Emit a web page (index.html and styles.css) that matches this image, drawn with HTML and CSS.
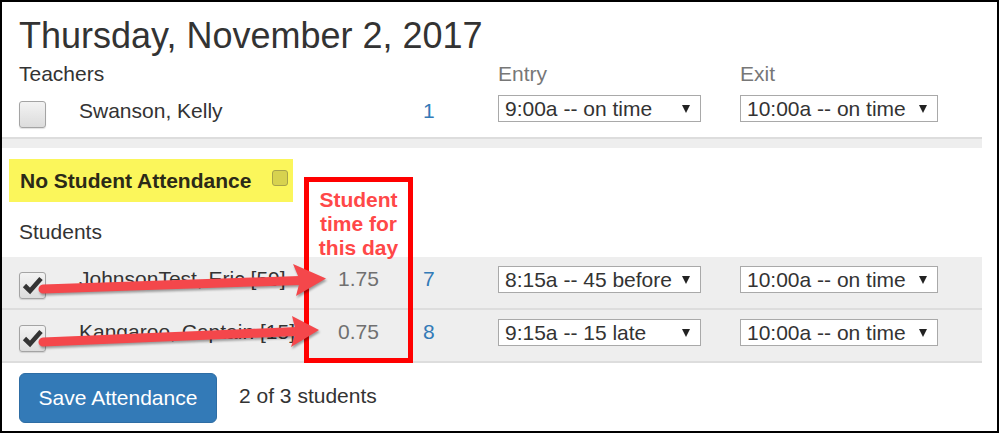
FILE: index.html
```html
<!DOCTYPE html>
<html>
<head>
<meta charset="utf-8">
<link rel="stylesheet" href="styles.css">
</head>
<body>
<div class="frame">
  <div class="panel">
    <h1 class="title">Thursday, November 2, 2017</h1>
    <div class="grid head-row">
      <div class="span2">Teachers</div>
      <div class="muted entry-col">Entry</div>
      <div class="muted exit-col">Exit</div>
    </div>
    <div class="grid row teacher">
      <div class="cb"><span class="box"></span></div>
      <div class="cell">Swanson, Kelly</div>
      <div class="cell hours"></div>
      <div class="cell num">1</div>
      <div class="sel w-entry"><span>9:00a -- on time</span><i></i></div>
      <div class="sel w-exit"><span>10:00a -- on time</span><i></i></div>
    </div>
    <div class="spacer"></div>
    <div class="noatt"><span>No Student Attendance</span><span class="mini"></span></div>
    <div class="students-label">Students</div>
    <div class="grid row striped">
      <div class="cb"><span class="box checked"><svg viewBox="0 0 25 25" width="25" height="25"><polyline points="4.5,12.5 10,18 21,5.5" fill="none" stroke="#333" stroke-width="4.6"/></svg></span></div>
      <div class="cell name">JohnsonTest, Eric [59]</div>
      <div class="cell hours">1.75</div>
      <div class="cell num">7</div>
      <div class="sel w-entry"><span>8:15a -- 45 before</span><i></i></div>
      <div class="sel w-exit"><span>10:00a -- on time</span><i></i></div>
    </div>
    <div class="grid row striped">
      <div class="cb"><span class="box checked"><svg viewBox="0 0 25 25" width="25" height="25"><polyline points="4.5,12.5 10,18 21,5.5" fill="none" stroke="#333" stroke-width="4.6"/></svg></span></div>
      <div class="cell name">Kangaroo, Captain [15]</div>
      <div class="cell hours">0.75</div>
      <div class="cell num">8</div>
      <div class="sel w-entry"><span>9:15a -- 15 late</span><i></i></div>
      <div class="sel w-exit"><span>10:00a -- on time</span><i></i></div>
    </div>
    <div class="actions">
      <button class="btn">Save Attendance</button>
      <span class="count">2 of 3 students</span>
    </div>
  </div>

  <div class="callout">Student time for this day</div>

  <svg class="arrows" width="999" height="433" viewBox="0 0 999 433">
    <g class="arrow">
      <line x1="43" y1="289" x2="300" y2="280.5" stroke="#f4474b" stroke-width="9" stroke-linecap="round"/>
      <polygon points="293,264 326,278.5 296,296 300,280.5" fill="#f4474b"/>
    </g>
    <g class="arrow">
      <line x1="43" y1="342" x2="297" y2="331.5" stroke="#f4474b" stroke-width="9" stroke-linecap="round"/>
      <polygon points="292,316 319,330 291,347 296,331.5" fill="#f4474b"/>
    </g>
  </svg>
</div>
</body>
</html>
```

FILE: styles.css
```css
body {
  margin: 0;
  font-family: "Liberation Sans", Arial, sans-serif;
  color: #333;
  background: #fff;
}

.frame {
  position: relative;
  width: 999px;
  height: 433px;
  box-sizing: border-box;
  border: 2px solid #000;
  overflow: hidden;
  background: #fff;
}

.panel {
  width: 980px;
  padding-top: 14px;
}

.title {
  margin: 0 0 4px;
  padding-left: 17px;
  font-size: 36px;
  font-weight: 400;
  line-height: 40px;
  color: #333;
}

.grid {
  display: grid;
  grid-template-columns: 60px 225px 109px 85px 242px 1fr;
  padding-left: 17px;
  font-size: 21px;
}

.head-row {
  height: 28px;
  line-height: 28px;
}

.span2 { grid-column: 1 / span 2; }
.entry-col { grid-column: 5; }
.exit-col { grid-column: 6; }
.muted { color: #777; }

.row {
  height: 49px;
  border-bottom: 2px solid #ddd;
  align-items: start;
  line-height: 30px;
}

.teacher .cb { margin-top: 13px; }
.teacher .cell { margin-top: 8px; }
.teacher .sel { margin-top: 7px; }

.striped {
  height: 51px;
  background: #eee;
}
.striped .cb { margin-top: 15px; }
.striped .cell { margin-top: 7px; }
.striped .sel { margin-top: 9px; }

.cell { white-space: nowrap; }

.box {
  display: block;
  width: 25px;
  height: 25px;
  border: 1px solid #a4a4a4;
  border-radius: 3px;
  background: linear-gradient(#f3f3f3, #dcdcdc);
  box-shadow: 0 1px 1px rgba(0,0,0,0.12);
}
.box svg { display: block; }

.hours {
  text-align: center;
  color: #707070;
}

.num {
  padding-left: 10px;
  color: #337ab7;
}

.sel {
  box-sizing: border-box;
  height: 27px;
  border: 1px solid #a9a9a9;
  background: #fff;
  display: flex;
  align-items: center;
  justify-content: space-between;
  padding: 0 10px 0 6px;
  line-height: 25px;
  color: #333;
  white-space: nowrap;
}
.sel i {
  width: 0;
  height: 0;
  border-left: 4.5px solid transparent;
  border-right: 4.5px solid transparent;
  border-top: 8px solid #222;
}
.w-entry { width: 203px; }
.w-exit { width: 198px; }

.spacer {
  height: 9px;
  background: #eee;
}

.noatt {
  display: flex;
  align-items: flex-start;
  box-sizing: border-box;
  width: 284px;
  height: 43px;
  margin: 11px 0 0 7px;
  padding-left: 11px;
  background: #fbf65b;
  font-size: 21px;
  font-weight: bold;
  line-height: 43px;
  color: #2b2a17;
}
.mini {
  width: 16px;
  height: 16px;
  box-sizing: border-box;
  margin: 11px 0 0 21px;
  border: 1px solid #a8a34a;
  border-radius: 3px;
  background: #d7d24f;
}

.students-label {
  margin: 15px 0 10px;
  padding-left: 17px;
  font-size: 21px;
  line-height: 30px;
}

.actions {
  display: flex;
  align-items: center;
  margin-top: 10px;
  padding-left: 17px;
  font-size: 21px;
}

.btn {
  width: 198px;
  height: 50px;
  padding: 0;
  background: #337ab7;
  border: 1px solid #2e6da4;
  border-radius: 6px;
  color: #fff;
  font-family: inherit;
  font-size: 21px;
}

.count {
  margin-left: 22px;
  margin-bottom: 4px;
}

.callout {
  position: absolute;
  left: 302px;
  top: 175px;
  width: 109px;
  height: 186px;
  box-sizing: border-box;
  border: 5px solid #ff0000;
  padding-top: 6px;
  text-align: center;
  font-size: 21px;
  font-weight: bold;
  line-height: 24px;
  color: #ff4848;
}

.arrows {
  position: absolute;
  left: -2px;
  top: -2px;
  pointer-events: none;
}
.arrow {
  filter: drop-shadow(1px 2px 1px rgba(0,0,0,0.35));
}
```
